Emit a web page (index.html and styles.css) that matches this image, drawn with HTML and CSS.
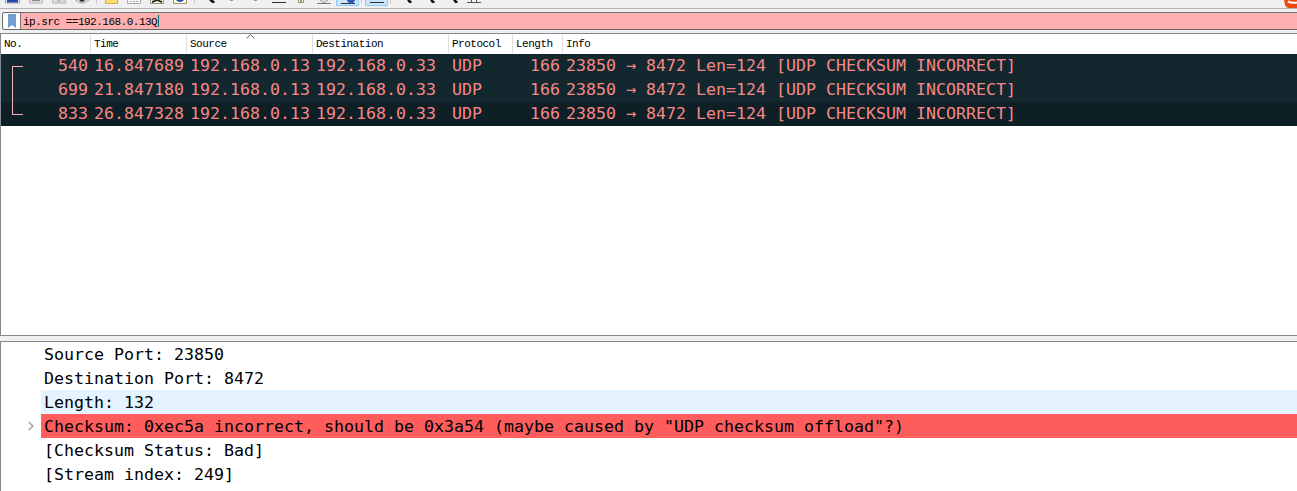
FILE: index.html
```
<!DOCTYPE html>
<html lang="en"><head><meta charset="utf-8"><title>Packet capture</title><link rel="stylesheet" href="styles.css"></head>
<body>
<div class="toolbar"><svg class="icons" width="1297" height="8" viewBox="0 0 1297 8">
<path d="M5.500 0v3h14V0" fill="#ddd" stroke="#aaa"/><path d="M7 0h11v2.500H7z" fill="#2448b8"/>
<path d="M29.500 0v3h13V0M52.500 0v3h13V0" stroke="#b4b4b4" fill="#ddd"/><path d="M32 0h8v1h-8z" fill="#888"/><path d="M57 2l2-2 2 2" stroke="#aaa" fill="none"/>
<path d="M75 0q7 6.500 14 0" stroke="#aaa" fill="#ddd"/><path d="M79 0h6q-3 4-6 0z" fill="#333"/>
<path d="M96.500 0v4M194.500 0v4M361.500 0v4M390.500 0v4" stroke="#ccc"/>
<path d="M105.500-1v4.500h12V-1" fill="#fbdc72" stroke="#d9ad3a"/>
<path d="M127.500 0v3.500h13V0" fill="#f6f6f6" stroke="#aaa"/><path d="M150.500 0v3.500h13V0M173.500 0v3.500h13V0" fill="#fff8dc" stroke="#999378"/><path d="M130 1.500h8" stroke="#aaa" stroke-dasharray="2 1"/>
<path d="M152 3V1l3-1h4l3 1v2l-5-2z" fill="#222"/><path d="M176 0h8q-4 4-8 0z" fill="#234da8"/>
<path d="M209 0h4l2 2-1 1h-2z" fill="#111"/><path d="M230 0h3v1h-3zM254 0h3v1h-3z" fill="#999"/><path d="M272 2.500h14" stroke="#26343c"/>
<path d="M298.500-1v3.500h5V-1" fill="#fff" stroke="#888"/><path d="M300 0h2v1.500h-2z" fill="#4b9a10"/>
<path d="M317 3.500h14" stroke="#777"/><path d="M320 0l4 3 4-3" fill="#deded0" stroke="#999"/>
<path d="M336.500-1v6.500h22V-1M365.500-1v6.500h22V-1" fill="#cce4f7" stroke="#90c8f6"/>
<path d="M341 3.500h14M370 2.500h14" stroke="#26343c"/><path d="M347 0h8q0 2-4 4-4-2-4-4z" fill="#2f5cb0"/>
<path d="M407 0h3l2 2-1 1h-2zM430 0h3l2 2-1 1h-2zM453 0h3l2 2-1 1h-2z" fill="#111"/><path d="M467 2.500h14M471.500 0v2M476.500 0v2" stroke="#555"/>
<path d="M1284 0h13v8h-8q-3 0-4-3z" fill="#f04a12"/><path d="M1288 1.500q4 2 9 1" stroke="#fff" stroke-width="2" fill="none"/>
</svg></div>
<div class="filter-area"><div class="filter"><span class="bookmark"><svg width="8" height="14" viewBox="0 0 8 14"><path d="M0 0h8v14l-4-3-4 3z" fill="#729fcf"/></svg></span><span class="query">ip.src ==192.168.0.13Q</span><i class="caret"></i></div></div>
<main class="packets">
<div class="row head"><span>No.</span><span>Time</span><span>Source<svg class="sort" width="9" height="5" viewBox="0 0 9 5"><path d="M.5 4.500l4-4 4 4" fill="none" stroke="#666"/></svg></span><span>Destination</span><span>Protocol</span><span>Length</span><span>Info</span></div>
<div class="list">
<div class="row"><span class="num">540</span><span>16.847689</span><span>192.168.0.13</span><span>192.168.0.33</span><span>UDP</span><span class="num">166</span><span>23850 → 8472 Len=124 [UDP CHECKSUM INCORRECT]</span></div>
<div class="row"><span class="num">699</span><span>21.847180</span><span>192.168.0.13</span><span>192.168.0.33</span><span>UDP</span><span class="num">166</span><span>23850 → 8472 Len=124 [UDP CHECKSUM INCORRECT]</span></div>
<div class="row current"><span class="num">833</span><span>26.847328</span><span>192.168.0.13</span><span>192.168.0.33</span><span>UDP</span><span class="num">166</span><span>23850 → 8472 Len=124 [UDP CHECKSUM INCORRECT]</span></div>
<i class="bracket"></i></div>
</main>
<section class="details">
<div class="field">Source Port: 23850</div>
<div class="field">Destination Port: 8472</div>
<div class="field hover">Length: 132</div>
<div class="field bad"><svg class="chevron" width="6" height="10" viewBox="0 0 6 10"><path d="M.8 1l4 4-4 4" fill="none" stroke="#a6a6a6" stroke-width="1.600"/></svg>Checksum: 0xec5a incorrect, should be 0x3a54 (maybe caused by "UDP checksum offload"?)</div>
<div class="field">[Checksum Status: Bad]</div>
<div class="field">[Stream index: 249]</div>
</section>
</body></html>
```
FILE: styles.css
```
* { box-sizing: border-box; }
body { margin: 0; height: 491px; overflow: hidden; background: #f0f0f0; display: flex; flex-direction: column; font: 16.61px/24px "DejaVu Sans Mono", monospace; color: #000; }
.toolbar { height: 9px; background: #f0f0f0; border-bottom: 1px solid #b4b4b4; flex: none; }
.icons { display: block; }
.filter-area { height: 24px; padding: 3px 0 3px 2px; flex: none; }
.filter { height: 18px; border: 1px solid #6b6b6b; border-right: 0; border-radius: 3px 0 0 3px; background: #ffafaf; display: flex; align-items: center; overflow: hidden; }
.bookmark { width: 18px; height: 16px; flex: none; background: #fff; border-right: 1px solid #777; display: flex; align-items: center; justify-content: center; }
.query { padding: 1px 0 0 2px; font: 11px/16px "Liberation Mono", monospace; letter-spacing: -0.5px; }
.caret { width: 1px; height: 12px; margin-left: 1px; background: #007070; }
.packets { height: 303px; flex: none; background: #fff; border: solid #828790; border-width: 1px 0 1px 1px; }
.row { display: grid; grid-template-columns: 90px 96px 126px 136px 64px 50px 1fr; height: 24px; white-space: pre; }
.row span { padding-left: 3px; overflow: hidden; }
.row .num { text-align: right; padding: 0 3px 0 0; }
.head { height: 20px; font: 11px/21px "Liberation Mono", monospace; letter-spacing: -0.5px; }
.head span { border-right: 1px solid #e0e0e0; position: relative; }
.head span:last-child { border: 0; }
.sort { position: absolute; left: 59px; top: 0; }
.list { position: relative; background: #12272e; color: #f78787; }
.list .row { line-height: 23px; }
.current { background: #0e1f25; }
.bracket { position: absolute; left: 11px; top: 12px; width: 11px; height: 49px; border: 1px solid #f7b5b5; border-right: 0; }
.details { margin-top: 5px; flex: 1; background: #fff; border: solid #828790; border-width: 1px 0 0 1px; padding-left: 40px; }
.field { height: 24px; padding-left: 3px; white-space: pre; position: relative; line-height: 25px; }
.hover { background: #e5f3ff; }
.bad { background: #ff5c5c; }
.chevron { position: absolute; left: -13px; top: 7px; }
```
